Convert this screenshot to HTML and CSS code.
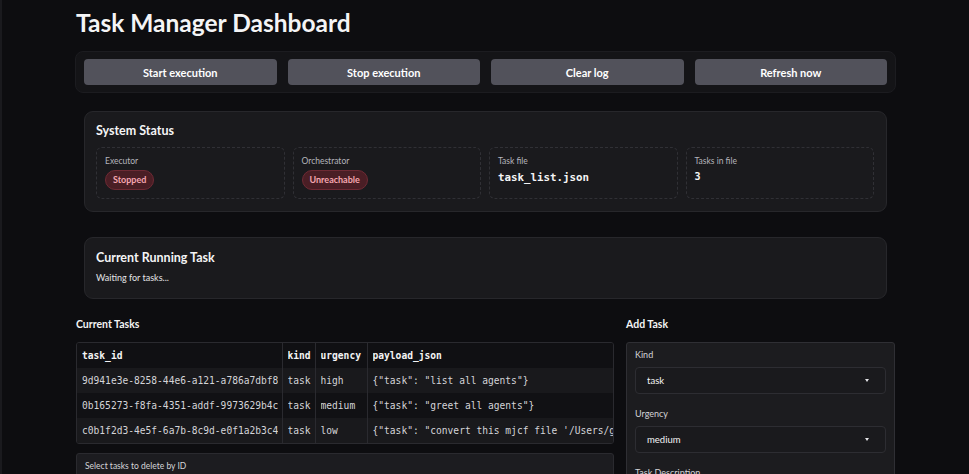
FILE: index.html
```html
<!DOCTYPE html>
<html>
<head>
<meta charset="utf-8">
<link rel="stylesheet" href="styles.css">
</head>
<body>
<div class="page">
  <h1 class="title">Task Manager Dashboard</h1>

  <div class="btn-row">
    <button class="btn">Start execution</button>
    <button class="btn">Stop execution</button>
    <button class="btn">Clear log</button>
    <button class="btn">Refresh now</button>
  </div>

  <div class="card status-card">
    <div class="card-title">System Status</div>
    <div class="stat-grid">
      <div class="stat">
        <div class="stat-label">Executor</div>
        <span class="badge">Stopped</span>
      </div>
      <div class="stat">
        <div class="stat-label">Orchestrator</div>
        <span class="badge">Unreachable</span>
      </div>
      <div class="stat">
        <div class="stat-label">Task file</div>
        <div class="stat-value mono">task_list.json</div>
      </div>
      <div class="stat">
        <div class="stat-label">Tasks in file</div>
        <div class="stat-value mono small">3</div>
      </div>
    </div>
  </div>

  <div class="card running-card">
    <div class="card-title">Current Running Task</div>
    <div class="running-text">Waiting for tasks...</div>
  </div>

  <div class="columns">
    <div class="col-left">
      <div class="section-title">Current Tasks</div>
      <div class="table-wrap">
        <table class="tasks">
          <colgroup>
            <col class="c-id"><col class="c-kind"><col class="c-urg"><col class="c-pay">
          </colgroup>
          <thead>
            <tr><th><div class="cell">task_id</div></th><th><div class="cell">kind</div></th><th><div class="cell">urgency</div></th><th><div class="cell">payload_json</div></th></tr>
          </thead>
          <tbody>
            <tr class="odd"><td><div class="cell">9d941e3e-8258-44e6-a121-a786a7dbf8c2</div></td><td><div class="cell">task</div></td><td><div class="cell">high</div></td><td><div class="cell">{"task": "list all agents"}</div></td></tr>
            <tr><td><div class="cell">0b165273-f8fa-4351-addf-9973629b4cd1</div></td><td><div class="cell">task</div></td><td><div class="cell">medium</div></td><td><div class="cell">{"task": "greet all agents"}</div></td></tr>
            <tr class="odd"><td><div class="cell">c0b1f2d3-4e5f-6a7b-8c9d-e0f1a2b3c4d5</div></td><td><div class="cell">task</div></td><td><div class="cell">low</div></td><td><div class="cell">{"task": "convert this mjcf file '/Users/gordon/model.xml'"}</div></td></tr>
          </tbody>
        </table>
      </div>
      <div class="delete-box">Select tasks to delete by ID</div>
    </div>
    <div class="col-right">
      <div class="section-title">Add Task</div>
      <div class="form-panel">
        <div class="field-label">Kind</div>
        <div class="select"><span>task</span><span class="caret"></span></div>
        <div class="field-label gap">Urgency</div>
        <div class="select"><span>medium</span><span class="caret"></span></div>
        <div class="field-label gap">Task Description</div>
      </div>
    </div>
  </div>
</div>
</body>
</html>
```

FILE: styles.css
```css
* { box-sizing: border-box; }
html, body {
  margin: 0;
  padding: 0;
  background: #0d0d10;
  height: 100%;
  overflow: hidden;
}
body {
  font-family: "Lato", "Noto Sans", sans-serif;
  color: #f4f4f5;
  border-left: 2px solid #1a1a1e;
}
.page {
  width: 821px;
  margin-left: 73px;
  padding-top: 8px;
}
.title {
  margin: 0 0 0 1px;
  font-size: 24.5px;
  line-height: 30px;
  font-weight: 700;
  color: #f4f4f5;
}
.btn-row {
  margin-top: 13px;
  display: flex;
  gap: 11px;
  padding: 7px 8px;
  background: #141417;
  border: 1px solid #1c1c20;
  border-radius: 8px;
}
.btn {
  flex: 1;
  height: 26px;
  border: none;
  border-radius: 4px;
  background: #52525b;
  color: #ffffff;
  font-family: "Lato", sans-serif;
  font-weight: 700;
  font-size: 11px;
  padding: 0;
}
.card {
  margin: 0 9px 0 9px;
  background: #1a1a1d;
  border: 1px solid #27272b;
  border-radius: 9px;
  padding: 11px 12px 12px 11px;
}
.status-card {
  margin-top: 18px;
  height: 101px;
}
.card-title {
  font-size: 12.5px;
  font-weight: 700;
  line-height: 16px;
  color: #f4f4f5;
}
.stat-grid {
  margin-top: 8px;
  display: grid;
  grid-template-columns: repeat(4, 1fr);
  gap: 8px;
}
.stat {
  height: 52px;
  border: 1px dashed #303035;
  border-radius: 6px;
  padding: 8px 8px 0 8px;
}
.stat-label {
  font-size: 8.5px;
  line-height: 11px;
  color: #b4b4bb;
}
.badge {
  display: inline-block;
  margin-top: 2px;
  height: 20px;
  line-height: 18px;
  padding: 0 7px;
  border-radius: 10px;
  background: #4a1e25;
  border: 1px solid #6e2a34;
  color: #f5a6b0;
  font-size: 9px;
  font-weight: 700;
}
.mono {
  font-family: "DejaVu Sans Mono", "Liberation Mono", monospace;
}
.stat-value {
  margin-top: 4px;
  font-size: 10.8px;
  font-weight: 700;
  color: #f4f4f5;
}
.stat-value.small {
  font-size: 10px;
}
.running-card {
  margin-top: 25px;
  height: 62px;
  padding-top: 12px;
}
.running-text {
  margin-top: 6px;
  font-size: 9px;
  line-height: 12px;
  color: #e4e4e7;
}
.columns {
  margin-top: 18px;
  display: flex;
  gap: 12px;
  padding-left: 1px;
}
.col-left { width: 538px; }
.col-right { width: 269px; }
.section-title {
  font-size: 10.5px;
  font-weight: 700;
  line-height: 14px;
  color: #f4f4f5;
}
.table-wrap {
  margin-top: 11px;
  border: 1px solid #2a2a2f;
  border-radius: 3px;
  overflow: hidden;
  background: #111114;
}
.tasks {
  width: 100%;
  border-collapse: collapse;
  table-layout: fixed;
  font-family: "DejaVu Sans Mono", "Liberation Mono", monospace;
  font-size: 9.6px;
}
.c-id { width: 205px; }
.c-kind { width: 33px; }
.c-urg { width: 52px; }
.tasks th, .tasks td {
  height: 25px;
  padding: 0 4px 0 5px;
  text-align: left;
  border-left: 1px solid #2a2a2f;
}
.tasks th:last-child, .tasks td:last-child { padding-right: 0; }
.cell {
  white-space: nowrap;
  overflow: hidden;
  line-height: 15px;
}
.tasks th:first-child, .tasks td:first-child { border-left: none; }
.tasks th {
  font-weight: 700;
  color: #f4f4f5;
  background: #101013;
}
.tasks td {
  color: #d4d4d8;
}
.tasks tr.odd td { background: #19191c; }
.delete-box {
  margin-top: 9px;
  height: 40px;
  background: #1c1c20;
  border: 1px solid #2a2a2f;
  border-radius: 3px;
  padding: 7px 8px;
  font-size: 8.5px;
  color: #d4d4d8;
}
.form-panel {
  margin-top: 11px;
  height: 150px;
  background: #1c1c1f;
  border: 1px solid #2f2f34;
  border-radius: 3px;
  padding: 6px 8px 0 8px;
}
.field-label {
  font-size: 9px;
  line-height: 12px;
  color: #d4d4d8;
}
.field-label.gap { margin-top: 14px; }
.select {
  margin-top: 6px;
  height: 27px;
  background: #1a1a1d;
  border: 1px solid #2d2d32;
  border-radius: 4px;
  display: flex;
  align-items: center;
  justify-content: space-between;
  padding: 0 16px 0 11px;
  font-size: 9.5px;
  color: #f4f4f5;
}
.caret {
  width: 0;
  height: 0;
  border-left: 2.5px solid transparent;
  border-right: 2.5px solid transparent;
  border-top: 3px solid #e4e4e7;
}
```
